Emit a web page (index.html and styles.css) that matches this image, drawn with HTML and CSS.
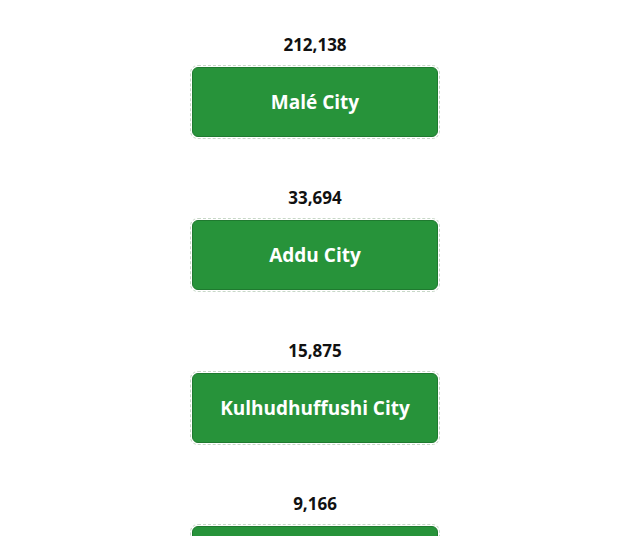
FILE: index.html
```html
<!DOCTYPE html>
<html>
<head>
<meta charset="utf-8">
<link rel="stylesheet" href="styles.css">
</head>
<body>
<div class="list">
  <div class="item">
    <div class="pop">212,138</div>
    <button class="city">Malé City</button>
  </div>
  <div class="item">
    <div class="pop">33,694</div>
    <button class="city">Addu City</button>
  </div>
  <div class="item">
    <div class="pop">15,875</div>
    <button class="city">Kulhudhuffushi City</button>
  </div>
  <div class="item">
    <div class="pop">9,166</div>
    <button class="city">Fuvahmulah City</button>
  </div>
</div>
</body>
</html>
```
FILE: styles.css
```css
html, body {
  margin: 0;
  padding: 0;
  background: #ffffff;
  font-family: "Open Sans", "Noto Sans", sans-serif;
}
.list {
  display: flex;
  flex-direction: column;
  align-items: center;
  gap: 51px;
  padding-top: 35px;
  padding-left: 3px;
  height: 536px;
  box-sizing: border-box;
  overflow: hidden;
}
.item {
  display: flex;
  flex-direction: column;
  align-items: center;
  gap: 12px;
}
.pop {
  height: 20px;
  line-height: 20px;
  font-size: 17px;
  font-weight: 700;
  color: #111111;
}
.city {
  width: 246px;
  height: 70px;
  box-sizing: border-box;
  background: #27933a;
  border: 1px solid #1f7a2f;
  border-radius: 6px;
  outline: 1px dashed #c8d8c8;
  outline-offset: 1px;
  color: #ffffff;
  font-family: "Open Sans", "Noto Sans", sans-serif;
  font-size: 19px;
  font-weight: 700;
  padding: 0;
  cursor: pointer;
}
```
